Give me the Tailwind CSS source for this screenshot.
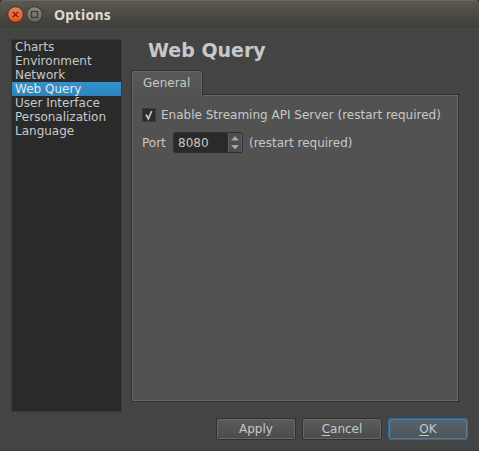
<!DOCTYPE html>
<html lang="en">
<head>
<meta charset="utf-8">
<title>Options</title>
<script src="https://cdn.jsdelivr.net/npm/@tailwindcss/browser@4"></script>
</head>
<body class="w-[479px] h-[451px] overflow-hidden bg-[#2b2b2b]">
<div class="w-[479px] h-[451px] flex flex-col overflow-hidden rounded-t-[4px] bg-[#444444] border-b border-[#3a3838] font-['DejaVu_Sans',sans-serif] text-[12px] leading-[14px] text-[#c8c8c8]">
  <header class="h-[28px] shrink-0 flex items-center pl-[7px] bg-linear-to-b from-[#5b584f] to-[#3e3d38] border-t border-[#6b685f]">
    <svg class="size-[17px]" viewBox="0 0 17 17">
      <defs><linearGradient id="o" x2="0" y2="1"><stop stop-color="#f58057"/><stop offset="1" stop-color="#e2521f"/></linearGradient>
      <linearGradient id="g" x2="0" y2="1"><stop stop-color="#8b8982"/><stop offset="1" stop-color="#66645d"/></linearGradient></defs>
      <circle cx="8.500" cy="8.500" r="7.800" fill="url(#o)" stroke="#34332e" stroke-width="1"/>
      <path d="M5.800 5.800l5.400 5.400M11.200 5.800l-5.400 5.400" stroke="#4a2416" stroke-width="1.200"/>
    </svg>
    <svg class="size-[17px] ml-[2px]" viewBox="0 0 17 17">
      <circle cx="8.500" cy="8.500" r="7.800" fill="url(#g)" stroke="#34332e" stroke-width="1"/>
      <rect x="5.500" y="5.500" width="6" height="6" fill="none" stroke="#3b3a35" stroke-width="1.200"/>
    </svg>
    <h1 class="ml-[11px] mt-px font-['Noto_Sans',sans-serif] font-bold text-[14px] tracking-[0.3px] leading-[18px] text-[#dfdbd2]">Options</h1>
  </header>
  <main class="flex pt-[11px] pl-[11px]">
    <ul class="w-[111px] h-[373px] border border-[#383838] bg-[#2a2a2a]">
      <li class="pl-[3px] h-[14px]">Charts</li>
      <li class="pl-[3px] h-[14px]">Environment</li>
      <li class="pl-[3px] h-[14px]">Network</li>
      <li class="pl-[3px] h-[14px] bg-linear-to-b from-[#3592cc] to-[#2b84bd] text-[#e8e8e8]">Web Query</li>
      <li class="pl-[3px] h-[14px]">User Interface</li>
      <li class="pl-[3px] h-[14px]">Personalization</li>
      <li class="pl-[3px] h-[14px]">Language</li>
    </ul>
    <section class="ml-[9px] w-[328px] flex flex-col">
      <h2 class="pl-[17px] h-[31px] text-[19px] leading-[22px] font-bold">Web Query</h2>
      <div class="relative z-10 w-[72px] h-[26px] rounded-t-[3px] border border-b-0 border-[#303030] bg-[#525252]">
        <div class="h-[26px] pl-[10px] pt-[4px] rounded-t-[2px] border border-b-0 border-[#686868] bg-linear-to-b from-[#585858] to-[#525252]">General</div>
      </div>
      <div class="-mt-[2px] h-[308px] border border-[#303030]">
        <div class="h-full border border-[#686868] bg-[#525252] pl-[9px] pt-[12px]">
          <div class="flex items-center h-[14px]">
            <svg class="size-[14px]" viewBox="0 0 14 14"><rect x=".5" y=".5" width="13" height="13" fill="#2c2c2c" stroke="#3b3b3b"/><path d="M4 6.500l2.400 4.300L9.700 3" fill="none" stroke="#c4c4c4" stroke-width="1.800"/></svg>
            <span class="ml-[5px]">Enable Streaming API Server (restart required)</span>
          </div>
          <div class="flex items-start h-[22px] mt-[10px]">
            <span class="w-[31px] mt-[4px]">Port</span>
            <div class="flex w-[70px] h-[21px] rounded-[3px] border border-[#303030] bg-[#2a2a2a] overflow-hidden">
              <span class="flex-1 pl-[4px] pt-[3px]">8080</span>
              <svg class="w-[14px] h-[19px]" viewBox="0 0 14 19"><rect width="14" height="19" fill="#4d4d4d"/><path d="M.5 0v19M13.500 0v19" stroke="#626262"/><path d="M3 7.500L7 3 11 7.500zM3 12h8l-4 4.500z" fill="#a5a5a5"/></svg>
            </div>
            <span class="ml-[6px] mt-[4px]">(restart required)</span>
          </div>
        </div>
      </div>
    </section>
  </main>
  <footer class="flex pl-[216px] pt-[6px] gap-[6px]">
    <button class="w-[80px] h-[22px] rounded-[3px] border border-[#303030] p-0"><span class="block h-[20px] pt-[2px] rounded-[2px] border border-[#686868] bg-linear-to-b from-[#5b5b5b] to-[#4c4c4c]">Apply</span></button>
    <button class="w-[80px] h-[22px] rounded-[3px] border border-[#303030] p-0"><span class="block h-[20px] pt-[2px] rounded-[2px] border border-[#686868] bg-linear-to-b from-[#5b5b5b] to-[#4c4c4c]"><u class="underline-offset-2">C</u>ancel</span></button>
    <button class="w-[80px] h-[22px] rounded-[3px] border border-[#246d9e] p-0"><span class="block h-[20px] pt-[2px] rounded-[2px] border border-[#63798a] bg-linear-to-b from-[#5a636a] to-[#4b555c]"><u class="underline-offset-2">O</u>K</span></button>
  </footer>
</div>
</body>
</html>
